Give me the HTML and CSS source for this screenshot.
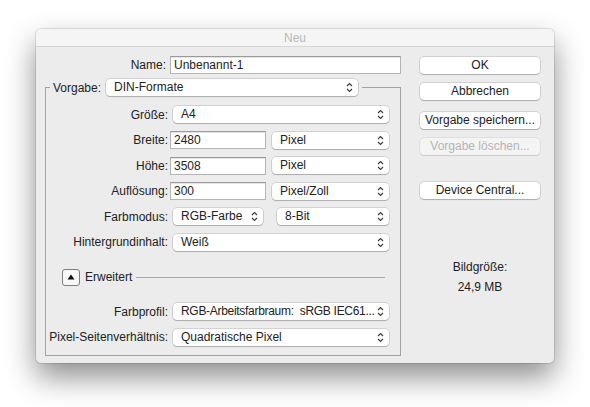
FILE: index.html
```html
<!DOCTYPE html>
<html>

<head>
    <title>Neu</title>

    <link rel="stylesheet" href="styles.css">
</head>

<body>
    <div class="window">
        <div class="titlebar">Neu</div>
        <div class="content">
            <div class="main">
                <div class="nameRow">
                    <span class="lbl">Name:</span>
                    <div class="field nameField">Unbenannt-1</div>
                </div>

                <fieldset class="preset">
                    <legend>
                        <span class="lbl">Vorgabe:</span>
                        <div class="popup presetPopup">DIN-Formate
                            <svg class="chev" width="7" height="11" viewBox="0 0 7 11"><path d="M1 4 L3.5 1.5 L6 4 M1 7 L3.5 9.5 L6 7" /></svg>
                        </div>
                    </legend>

                    <div class="row">
                        <span class="lbl">Größe:</span>
                        <div class="popup wide">A4
                            <svg class="chev" width="7" height="11" viewBox="0 0 7 11"><path d="M1 4 L3.5 1.5 L6 4 M1 7 L3.5 9.5 L6 7" /></svg>
                        </div>
                    </div>
                    <div class="row">
                        <span class="lbl">Breite:</span>
                        <div class="field num">2480</div>
                        <div class="popup unit">Pixel
                            <svg class="chev" width="7" height="11" viewBox="0 0 7 11"><path d="M1 4 L3.5 1.5 L6 4 M1 7 L3.5 9.5 L6 7" /></svg>
                        </div>
                    </div>
                    <div class="row">
                        <span class="lbl">Höhe:</span>
                        <div class="field num">3508</div>
                        <div class="popup unit">Pixel
                            <svg class="chev" width="7" height="11" viewBox="0 0 7 11"><path d="M1 4 L3.5 1.5 L6 4 M1 7 L3.5 9.5 L6 7" /></svg>
                        </div>
                    </div>
                    <div class="row">
                        <span class="lbl">Auflösung:</span>
                        <div class="field num">300</div>
                        <div class="popup unit">Pixel/Zoll
                            <svg class="chev" width="7" height="11" viewBox="0 0 7 11"><path d="M1 4 L3.5 1.5 L6 4 M1 7 L3.5 9.5 L6 7" /></svg>
                        </div>
                    </div>
                    <div class="row">
                        <span class="lbl">Farbmodus:</span>
                        <div class="popup mode">RGB-Farbe
                            <svg class="chev" width="7" height="11" viewBox="0 0 7 11"><path d="M1 4 L3.5 1.5 L6 4 M1 7 L3.5 9.5 L6 7" /></svg>
                        </div>
                        <div class="popup bits">8-Bit
                            <svg class="chev" width="7" height="11" viewBox="0 0 7 11"><path d="M1 4 L3.5 1.5 L6 4 M1 7 L3.5 9.5 L6 7" /></svg>
                        </div>
                    </div>
                    <div class="row">
                        <span class="lbl">Hintergrundinhalt:</span>
                        <div class="popup wide">Weiß
                            <svg class="chev" width="7" height="11" viewBox="0 0 7 11"><path d="M1 4 L3.5 1.5 L6 4 M1 7 L3.5 9.5 L6 7" /></svg>
                        </div>
                    </div>

                    <div class="advanced">
                        <div class="disclose">
                            <svg width="8" height="6" viewBox="0 0 8 6"><path d="M0.5 5.5 L4 0.5 L7.5 5.5 Z" /></svg>
                        </div>
                        <span>Erweitert</span>
                        <div class="rule"></div>
                    </div>

                    <div class="row profileRow">
                        <span class="lbl">Farbprofil:</span>
                        <div class="popup wide tight">RGB-Arbeitsfarbraum:&nbsp; sRGB IEC61...
                            <svg class="chev" width="7" height="11" viewBox="0 0 7 11"><path d="M1 4 L3.5 1.5 L6 4 M1 7 L3.5 9.5 L6 7" /></svg>
                        </div>
                    </div>
                    <div class="row">
                        <span class="lbl">Pixel-Seitenverhältnis:</span>
                        <div class="popup wide">Quadratische Pixel
                            <svg class="chev" width="7" height="11" viewBox="0 0 7 11"><path d="M1 4 L3.5 1.5 L6 4 M1 7 L3.5 9.5 L6 7" /></svg>
                        </div>
                    </div>
                </fieldset>
            </div>

            <div class="side">
                <div class="btn btnOk">OK</div>
                <div class="btn btnCancel">Abbrechen</div>
                <div class="btn btnSave">Vorgabe speichern...</div>
                <div class="btn btnDelete disabled">Vorgabe löschen...</div>
                <div class="btn btnDevice">Device Central...</div>

                <div class="sizeInfo">
                    <div>Bildgröße:</div>
                    <div>24,9 MB</div>
                </div>
            </div>
        </div>
    </div>
</body>

</html>
```

FILE: styles.css
```css
html {
    background: #ffffff;
}

body {
    margin: 0;
    padding: 29px 0 44px 36px;
    font-family: "Liberation Sans", Arial, sans-serif;
    font-size: 12px;
    color: #222;
}

.window {
    width: 518px;
    height: 334px;
    background: #ececec;
    border-radius: 5px;
    box-shadow: 0 0 0 1px rgba(0, 0, 0, 0.1), 0 14px 30px rgba(0, 0, 0, 0.45);
    overflow: hidden;
}

.titlebar {
    height: 17px;
    line-height: 18px;
    text-align: center;
    font-size: 12px;
    color: #b9b9b9;
    background: #f5f5f5;
    border-bottom: 1px solid #d6d6d6;
}

.content {
    display: flex;
}

.main {
    width: 365px;
    padding-left: 9px;
}

/* name row */

.nameRow {
    display: flex;
    align-items: center;
    margin-top: 9px;
}

.nameRow .lbl {
    width: 121px;
    text-align: right;
    margin-right: 4px;
}

.field {
    box-sizing: border-box;
    height: 18px;
    line-height: 16px;
    padding-left: 3px;
    background: #fff;
    border: 1px solid #b4b4b4;
    border-top-color: #9a9a9a;
    box-shadow: inset 0 1px 0 #e4e4e4;
}

.nameField {
    width: 231px;
}

.num {
    width: 96px;
}

/* popups */

.popup {
    position: relative;
    box-sizing: border-box;
    height: 17px;
    line-height: 16px;
    padding-left: 8px;
    background: #fff;
    border-radius: 4px;
    box-shadow: 0 0 0 0.5px rgba(0, 0, 0, 0.22), 0 1px 1px rgba(0, 0, 0, 0.18);
    white-space: nowrap;
}

.tight {
    letter-spacing: -0.3px;
}

.chev {
    position: absolute;
    right: 5px;
    top: 3px;
    fill: none;
    stroke: #3a3a3a;
    stroke-width: 1.1;
}

.wide {
    width: 216px;
    margin-left: 3px;
}

.unit {
    width: 117px;
    margin-left: 6px;
}

.mode {
    width: 90px;
    margin-left: 3px;
}

.bits {
    width: 112px;
    margin-left: 14px;
}

/* preset group */

.preset {
    width: 354px;
    margin: 5px 0 0 0;
    padding: 6px 0 5px 0;
    border: 1px solid #a3a3a3;
}

.preset legend {
    display: flex;
    align-items: center;
    margin-left: 4px;
    padding: 0 4px 0 3px;
}

.presetPopup {
    width: 252px;
    margin-left: 5px;
}

.row {
    display: flex;
    align-items: center;
    height: 25.5px;
}

.row .lbl {
    width: 122px;
    margin-right: 2px;
    text-align: right;
}

.profileRow {
    margin-top: 9px;
}

.advanced {
    display: flex;
    align-items: center;
    height: 25.5px;
    margin-top: 9.5px;
}

.disclose {
    box-sizing: border-box;
    width: 18px;
    height: 17px;
    margin-left: 16px;
    margin-right: 5px;
    display: flex;
    align-items: center;
    justify-content: center;
    border: 1px solid #7d7d7d;
    border-radius: 3px;
    background: #f7f7f7;
}

.disclose svg {
    fill: #111;
}

.rule {
    flex: 1;
    height: 1px;
    margin: 0 15px 0 4px;
    background: #a8a8a8;
}

/* right column */

.side {
    width: 120px;
    margin-left: 10px;
    text-align: center;
}

.btn {
    box-sizing: border-box;
    height: 17px;
    line-height: 17px;
    background: #fff;
    border-radius: 4px;
    box-shadow: 0 0 0 0.5px rgba(0, 0, 0, 0.22), 0 1px 1px rgba(0, 0, 0, 0.18);
}

.btnOk {
    margin-top: 10px;
}

.btnCancel {
    margin-top: 9px;
}

.btnSave {
    margin-top: 12px;
}

.btnDelete {
    margin-top: 9px;
}

.btnDevice {
    margin-top: 27px;
}

.disabled {
    color: #b4b4b4;
    background: #f4f4f4;
    box-shadow: 0 0 0 0.5px rgba(0, 0, 0, 0.12), 0 1px 1px rgba(0, 0, 0, 0.08);
}

.sizeInfo {
    margin-top: 58px;
    line-height: 20px;
}
```
